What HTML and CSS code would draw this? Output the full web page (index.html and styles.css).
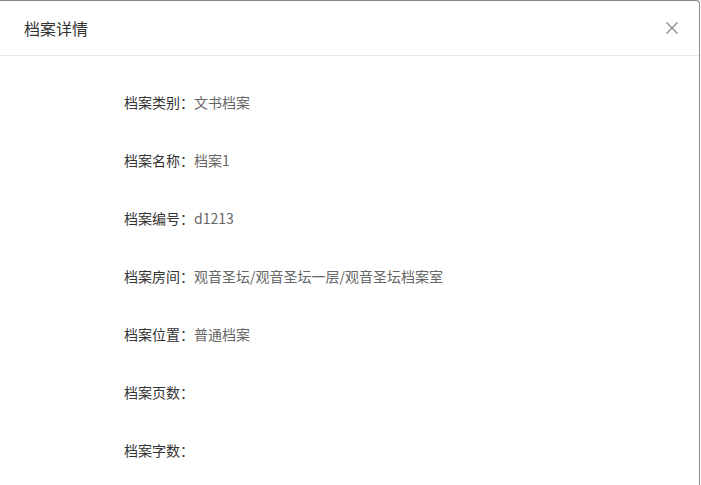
FILE: index.html
```html
<!DOCTYPE html>
<html lang="zh">
<head>
<meta charset="utf-8">
<link rel="stylesheet" href="styles.css">
</head>
<body>
<div class="modal">
  <div class="modal-header">
    <div class="modal-title">档案详情</div>
    <button class="modal-close" aria-label="关闭">
      <svg width="14" height="14" viewBox="0 0 14 14"><path d="M1.5 1.5 L12.5 12.5 M12.5 1.5 L1.5 12.5" stroke="#8c8c8c" stroke-width="1.3" fill="none"/></svg>
    </button>
  </div>
  <div class="modal-body">
    <div class="row"><span class="label">档案类别：</span><span class="value">文书档案</span></div>
    <div class="row"><span class="label">档案名称：</span><span class="value">档案1</span></div>
    <div class="row"><span class="label">档案编号：</span><span class="value">d1213</span></div>
    <div class="row"><span class="label">档案房间：</span><span class="value">观音圣坛/观音圣坛一层/观音圣坛档案室</span></div>
    <div class="row"><span class="label">档案位置：</span><span class="value">普通档案</span></div>
    <div class="row"><span class="label">档案页数：</span><span class="value"></span></div>
    <div class="row"><span class="label">档案字数：</span><span class="value"></span></div>
  </div>
</div>
</body>
</html>
```

FILE: styles.css
```css
html, body {
  margin: 0;
  padding: 0;
  background: #fff;
  overflow: hidden;
}
body {
  font-family: "Noto Sans CJK SC", "Noto Sans", sans-serif;
  color: #333;
}
.modal {
  box-sizing: border-box;
  width: 700px;
  height: 485px;
  border-top: 1px solid #8a8a8a;
  border-right: 1px solid #8a8a8a;
  border-top-right-radius: 4px;
  background: #fff;
}
.modal-header {
  display: flex;
  align-items: center;
  justify-content: space-between;
  height: 54px;
  padding: 0 20px 0 24px;
  border-bottom: 1px solid #e8e8e8;
}
.modal-title {
  font-size: 16px;
  line-height: 22px;
  color: #333;
  margin-top: -1px;
}
.modal-close {
  border: 0;
  background: none;
  padding: 0;
  width: 14px;
  height: 14px;
  display: flex;
  margin-top: -1px;
}
.modal-body {
  padding: 36px 0 0 124px;
  display: flex;
  flex-direction: column;
  gap: 38px;
}
.row {
  font-size: 14px;
  line-height: 20px;
  height: 20px;
  display: flex;
}
.label {
  color: #333;
}
.value {
  color: #666;
}
```
